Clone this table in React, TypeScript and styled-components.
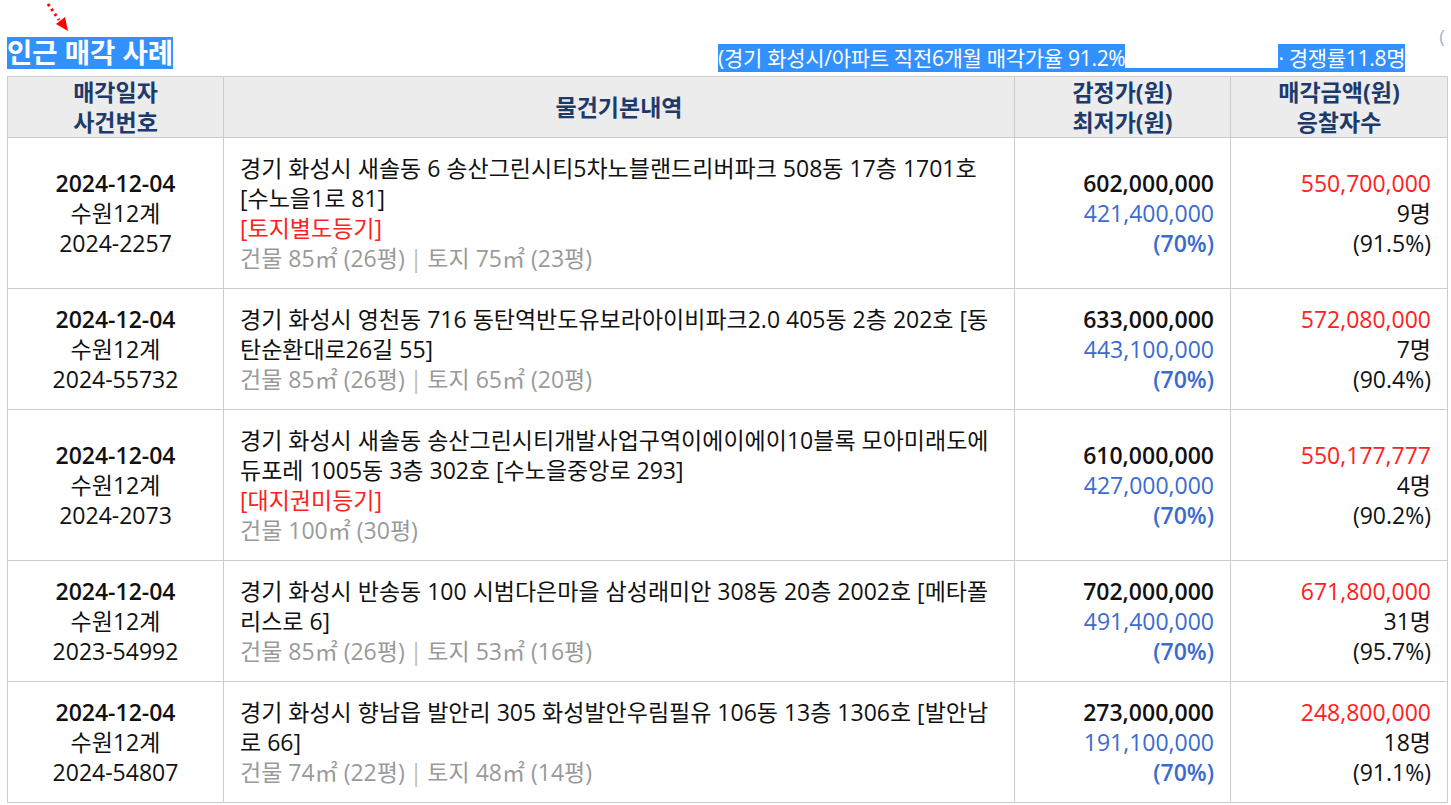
import React from "react";
import styled, { createGlobalStyle } from "styled-components";

const GlobalStyle = createGlobalStyle`
  html, body { margin: 0; padding: 0; background: #ffffff; overflow: hidden; }
  body { font-family: "Open Sans", "Noto Sans CJK KR", sans-serif; color: #111111; }
`;

const Page = styled.div`
  position: relative;
  width: 1440px;
  padding: 0 4px 0 7px;
`;

const TitleRow = styled.div`
  display: flex;
  align-items: flex-end;
  height: 72px;
  margin-bottom: 4px;
  white-space: nowrap;
`;

const Title = styled.h2`
  margin: 0 0 3px 0;
  font-size: 27.5px;
  font-weight: 700;
  line-height: 32px;
  color: #ffffff;
  background: #3391ff;
`;

const Summary = styled.div`
  margin-left: 545px;
  font-size: 21px;
  line-height: 28px;
  letter-spacing: -0.3px;
  color: #ffffff;
  background: #3391ff;
  display: flex;
  align-items: flex-start;
`;

const SummaryGap = styled.span`
  display: inline-block;
  width: 153px;
  height: 24px;
  background: #ffffff;
`;

const Clipped = styled.span`
  margin-left: 34px;
  font-size: 19px;
  line-height: 28px;
  color: #9fb3d6;
  align-self: center;
`;

const Arrow = styled.svg`
  position: absolute;
  left: 40px;
  top: 0;
`;

const Table = styled.table`
  width: 1440px;
  border-collapse: collapse;
  table-layout: fixed;
  font-size: 23px;
  line-height: 30px;
`;

const HeadCell = styled.th`
  background: #ececec;
  color: #1d3a6b;
  font-weight: 700;
  text-align: center;
  vertical-align: middle;
  border: 1px solid #cccccc;
  padding: 0;
`;

const Cell = styled.td<{ $align: "left" | "center" | "right" }>`
  border: 1px solid #cccccc;
  padding: 15px 16px;
  vertical-align: middle;
  text-align: ${(p) => p.$align};
`;

const Line = styled.div<{ $tone?: "bold" | "blue" | "blueBold" | "red" | "gray" | "plain" }>`
  color: ${(p) =>
    p.$tone === "blue" || p.$tone === "blueBold"
      ? "#3a6bd0"
      : p.$tone === "red"
      ? "#ff2020"
      : p.$tone === "gray"
      ? "#9a9a9a"
      : "#111111"};
  font-weight: ${(p) => (p.$tone === "bold" || p.$tone === "blueBold" ? 600 : 400)};
`;

const Sep = styled.span`
  color: #bbbbbb;
  padding: 0 5px;
`;

const Unit = styled.span`
  margin-right: 6px;
`;

type Area = { label: string; m2: string; py: string };

type Row = {
  date: string;
  court: string;
  caseNo: string;
  address: string;
  tag?: string;
  areas: Area[];
  appraisal: string;
  minimum: string;
  sale: string;
  bidders: string;
  ratio: string;
};

const rows: Row[] = [
  {
    date: "2024-12-04",
    court: "수원12계",
    caseNo: "2024-2257",
    address: "경기 화성시 새솔동 6 송산그린시티5차노블랜드리버파크 508동 17층 1701호 [수노을1로 81]",
    tag: "[토지별도등기]",
    areas: [
      { label: "건물", m2: "85", py: "26" },
      { label: "토지", m2: "75", py: "23" },
    ],
    appraisal: "602,000,000",
    minimum: "421,400,000",
    sale: "550,700,000",
    bidders: "9명",
    ratio: "(91.5%)",
  },
  {
    date: "2024-12-04",
    court: "수원12계",
    caseNo: "2024-55732",
    address: "경기 화성시 영천동 716 동탄역반도유보라아이비파크2.0 405동 2층 202호 [동탄순환대로26길 55]",
    areas: [
      { label: "건물", m2: "85", py: "26" },
      { label: "토지", m2: "65", py: "20" },
    ],
    appraisal: "633,000,000",
    minimum: "443,100,000",
    sale: "572,080,000",
    bidders: "7명",
    ratio: "(90.4%)",
  },
  {
    date: "2024-12-04",
    court: "수원12계",
    caseNo: "2024-2073",
    address: "경기 화성시 새솔동 송산그린시티개발사업구역이에이에이10블록 모아미래도에듀포레 1005동 3층 302호 [수노을중앙로 293]",
    tag: "[대지권미등기]",
    areas: [{ label: "건물", m2: "100", py: "30" }],
    appraisal: "610,000,000",
    minimum: "427,000,000",
    sale: "550,177,777",
    bidders: "4명",
    ratio: "(90.2%)",
  },
  {
    date: "2024-12-04",
    court: "수원12계",
    caseNo: "2023-54992",
    address: "경기 화성시 반송동 100 시범다은마을 삼성래미안 308동 20층 2002호 [메타폴리스로 6]",
    areas: [
      { label: "건물", m2: "85", py: "26" },
      { label: "토지", m2: "53", py: "16" },
    ],
    appraisal: "702,000,000",
    minimum: "491,400,000",
    sale: "671,800,000",
    bidders: "31명",
    ratio: "(95.7%)",
  },
  {
    date: "2024-12-04",
    court: "수원12계",
    caseNo: "2024-54807",
    address: "경기 화성시 향남읍 발안리 305 화성발안우림필유 106동 13층 1306호 [발안남로 66]",
    areas: [
      { label: "건물", m2: "74", py: "22" },
      { label: "토지", m2: "48", py: "14" },
    ],
    appraisal: "273,000,000",
    minimum: "191,100,000",
    sale: "248,800,000",
    bidders: "18명",
    ratio: "(91.1%)",
  },
];

export default function App() {
  return (
    <>
      <GlobalStyle />
      <Page>
        <Arrow width="40" height="34" viewBox="0 0 40 34">
          <line x1="8" y1="4" x2="19" y2="20" stroke="#ff0000" strokeWidth="3" strokeDasharray="2.5 3.5" />
          <polygon points="16,24 25,17 28,31" fill="#ff0000" />
        </Arrow>
        <TitleRow>
          <Title>인근 매각 사례</Title>
          <Summary>
            <span>(경기 화성시/아파트 직전6개월 매각가율 91.2%</span>
            <SummaryGap />
            <span> · 경쟁률11.8명</span>
          </Summary>
          <Clipped>(</Clipped>
        </TitleRow>
        <Table>
          <colgroup>
            <col style={{ width: 216 }} />
            <col style={{ width: 791 }} />
            <col style={{ width: 216 }} />
            <col style={{ width: 217 }} />
          </colgroup>
          <thead>
            <tr>
              <HeadCell>
                매각일자
                <br />
                사건번호
              </HeadCell>
              <HeadCell>물건기본내역</HeadCell>
              <HeadCell>
                감정가(원)
                <br />
                최저가(원)
              </HeadCell>
              <HeadCell>
                매각금액(원)
                <br />
                응찰자수
              </HeadCell>
            </tr>
          </thead>
          <tbody>
            {rows.map((r) => (
              <tr key={r.caseNo}>
                <Cell $align="center">
                  <Line $tone="bold">{r.date}</Line>
                  <Line>{r.court}</Line>
                  <Line>{r.caseNo}</Line>
                </Cell>
                <Cell $align="left">
                  <Line>{r.address}</Line>
                  {r.tag && <Line $tone="red">{r.tag}</Line>}
                  <Line $tone="gray">
                    {r.areas.map((a, i) => (
                      <React.Fragment key={a.label}>
                        {i > 0 && <Sep>|</Sep>}
                        {a.label} {a.m2}
                        <Unit>㎡</Unit>({a.py}평)
                      </React.Fragment>
                    ))}
                  </Line>
                </Cell>
                <Cell $align="right">
                  <Line $tone="bold">{r.appraisal}</Line>
                  <Line $tone="blue">{r.minimum}</Line>
                  <Line $tone="blueBold">(70%)</Line>
                </Cell>
                <Cell $align="right">
                  <Line $tone="red">{r.sale}</Line>
                  <Line>{r.bidders}</Line>
                  <Line>{r.ratio}</Line>
                </Cell>
              </tr>
            ))}
          </tbody>
        </Table>
      </Page>
    </>
  );
}
